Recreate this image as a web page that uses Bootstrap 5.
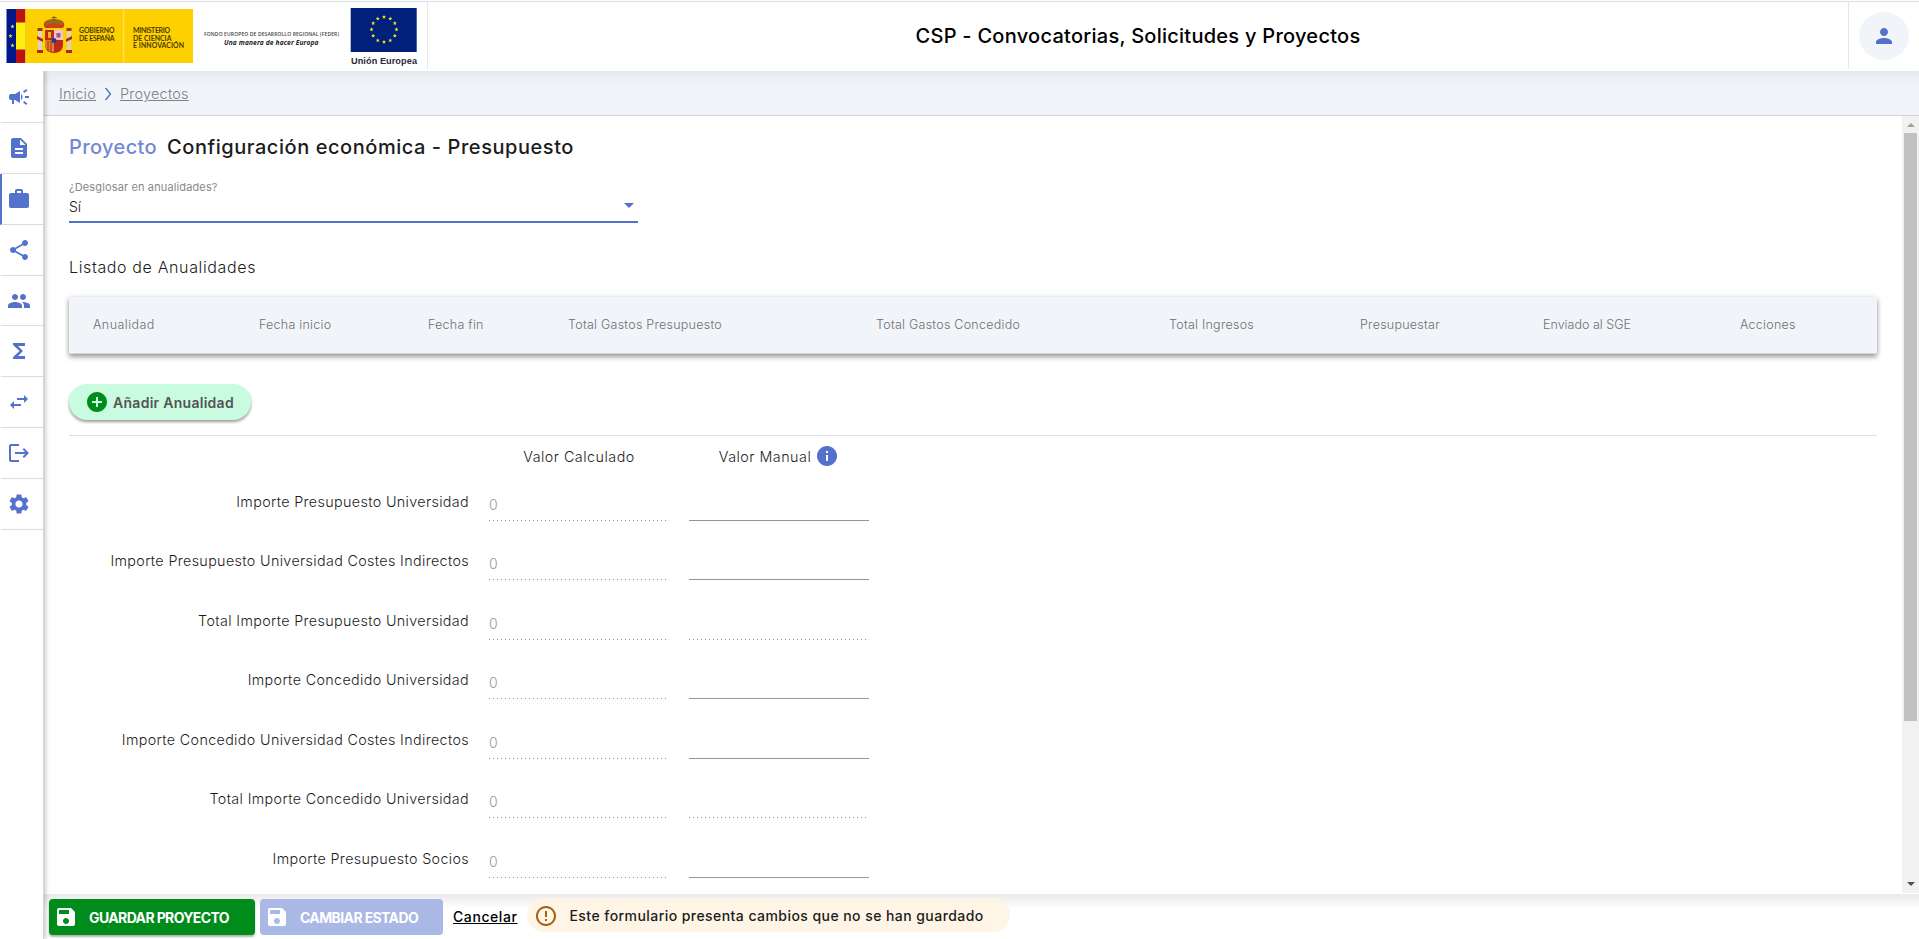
<!DOCTYPE html>
<html lang="es">
<head>
<meta charset="utf-8">
<meta name="viewport" content="width=device-width, initial-scale=1">
<title>CSP - Convocatorias, Solicitudes y Proyectos</title>
<link href="https://cdn.jsdelivr.net/npm/bootstrap@5.3.0/dist/css/bootstrap.min.css" rel="stylesheet">
<style>
  :root { --accent:#5472cb; --ink:#1c1c1c; --panel:#f1f5f9; }
  body { font-family: Inter, "Open Sans", sans-serif; font-size:14px; color:var(--ink); height:939px; overflow:hidden; background:#fff; }
  svg { display:block; flex:none; }
  .ic { width:24px; height:24px; fill:currentColor; }
  .topbar { height:70px; border-top:1px solid #dadde0; margin-top:1px; z-index:3; position:relative; }
  .brand { width:428px; height:67px; border-right:1px solid #e6e8ee; }
  .app-title { font-size:20px; font-weight:500; color:#000; line-height:30px; letter-spacing:.26px; padding-bottom:2px; }
  .user-box { width:71px; height:67px; border-left:1px solid #e6e8ee; padding:10px; }
  .avatar { width:50px; height:48px; background:var(--panel); color:var(--accent); }
  .side { width:44px; border-right:1px solid #d5d5d5; box-shadow:1px 0 5px rgba(0,0,0,.28); background:#fff; z-index:2; position:relative; padding-top:1.4px; }
  .side a { height:50.8px; border-bottom:1px solid #dcdcdc; border-left:2px solid transparent; padding-left:5px; padding-top:.4px; color:var(--accent); }
  .side a.active { border-left-color:var(--accent); }
  .crumbs { height:45px; border-bottom:1px solid #d0d5da; background:linear-gradient(#e6e9ec,var(--panel) 15px); padding:2px 0 0 15px; font-size:14.5px; font-weight:300; letter-spacing:.2px; }
  .crumbs a { color:#808080; }
  .pane { padding:0 25px; overflow:hidden; }
  h1.page { font-size:20px; font-weight:500; line-height:30px; margin:16px 0 0; letter-spacing:.55px; }
  h1 .kind { color:#7189d4; margin-right:10px; letter-spacing:.38px; }
  .f-label { font-size:11px; color:#888; line-height:16px; margin-top:17px; letter-spacing:.13px; }
  .f-select { width:569px; height:28px; border-bottom:2px solid var(--accent); line-height:24px; font-weight:300; padding-right:4px; }
  .caret { border:5px solid transparent; border-top-color:var(--accent); border-bottom:0; margin-top:8px; }
  h2.listing { font-size:16px; font-weight:300; line-height:24px; margin:32px 0 18px; letter-spacing:.63px; }
  .thead-bar { height:57px; background:var(--panel); border-bottom:1px solid #d3d7dc; box-shadow:0 3px 5px rgba(0,0,0,.36),0 0 6px rgba(0,0,0,.1); padding-left:24px;
    display:grid; grid-template-columns:166px 169px 140px 308px 293px 191px 183px 197px 1fr; align-items:center; font-size:12.5px; font-weight:300; letter-spacing:.25px; color:#707070; }
  .thead-bar .wide-ls { letter-spacing:.45px; }
  .thead-bar .tight-ls { letter-spacing:.02px; }
  .btn-add { width:182px; height:36px; margin-top:30px; border-radius:18px; background:#c9fbe0; color:#555; font-weight:600; font-size:14px; letter-spacing:.28px; box-shadow:0 2px 3px rgba(0,0,0,.4); padding:0 0 0 15px; gap:4px; }
  .btn-add .ic { color:#008c1a; }
  .sep { border-top:1px solid #dedede; margin-top:15px; }
  .fgrid { display:grid; grid-template-columns:400px 180px 180px; column-gap:20px; }
  .fhead { height:41px; font-weight:300; font-size:14.3px; letter-spacing:.5px; }
  .fhead .ic { color:var(--accent); margin-left:4px; position:relative; top:-1px; }
  .frow { height:59.45px; font-weight:300; }
  .frow label { line-height:22px; padding-top:14px; font-size:14.3px; letter-spacing:.36px; }
  .val { height:44px; padding-top:18px; line-height:20px; color:#999; }
  .val::after { content:""; display:block; height:1px; margin-top:5px; }
  .val.dis::after { width:178px; background:repeating-linear-gradient(90deg,#949494 0 1px,transparent 1px 4px); }
  .val.on::after { background:#949494; }
  .sbar { width:17px; background:#f1f1f1; padding:7px 0; height:777px; }
  .thumb { width:13px; height:588px; background:#c1c1c1; margin-top:6px; }
  .arr { border:4px solid transparent; }
  .arr.up { border-bottom-color:#a0a0a0; border-top:0; }
  .arr.dn { border-top-color:#505050; border-bottom:0; }
  .foot { height:45px; background:linear-gradient(#eaeaea,#fff 15px); padding:5px 0 0 5px; }
  .fbtn { height:36px; border-radius:4px; font-weight:700; font-size:14px; padding:0 0 0 4px; gap:11px; letter-spacing:-.62px; }
  .fbtn, .fbtn:hover { color:#fff; }
  .b-save, .b-save:hover { width:206px; background:#008c1a; box-shadow:0 2px 2px rgba(0,0,0,.3); }
  .b-state, .b-state:hover { width:183px; background:#aab8e6; margin-left:5px; }
  .cancel { color:#000; font-weight:500; margin-left:10px; line-height:36px; letter-spacing:.58px; }
  .notice { height:34px; width:483px; border-radius:17px; background:#fff5e6; margin-left:10px; padding-left:7px; gap:11px; font-weight:500; margin-top:-1px; letter-spacing:.44px; }
  .notice .ic { color:#a5620c; position:relative; top:1px; }
</style>
</head>
<body class="d-flex flex-column">
<header class="topbar d-flex justify-content-between bg-white flex-shrink-0">
  <div class="brand">
    <svg width="427" height="68" viewBox="0 2 427 68">
      <rect x="6.500" y="9" width="10" height="54" fill="#00188c"/>
      <rect x="16" y="9" width="9.500" height="54" fill="#bd1212"/><rect x="16" y="22.500" width="9.500" height="27" fill="#ffef0f"/>
      <rect x="25.500" y="9" width="167.500" height="54" fill="#ffd000"/>
      <path d="M123.700 9v54" stroke="#ffe680" stroke-width="1"/>
      <defs><path id="st" d="M0-2.200.55-.7 2.100-.7.850.25 1.300 1.800 0 .9-1.300 1.800-.85.25-2.100-.7-.55-.7z"/></defs>
      <g fill="#ffe81a"><use href="#st" x="12.500" y="26.500"/><use href="#st" x="10.500" y="36"/><use href="#st" x="12.500" y="45.500"/></g>
      <g>
        <path d="M38 31h4v19h-4zM67 31h4v19h-4z" fill="#d9d2c0"/><path d="M37.500 28h5v3h-5zM66.500 28h5v3h-5z" fill="#a33a1a"/>
        <path d="M37 36l6 3v3l-6-3zM72 36l-6 3v3l6-3zM37 50h6v3h-6zM66 50h6v3h-6z" fill="#b3261a"/>
        <path d="M45 28c-4-6 2-8 9-8s13 2 9 8z" fill="#c8401c"/><path d="M44.500 22c3-4 16-4 19 0l-2 3c-4-2-11-2-15 0z" fill="#9b6a12"/>
        <path d="M54 16v5M51.500 17.700h5" stroke="#7a5a14"/>
        <path d="M45 30h18v15c0 5-4 8-9 8s-9-3-9-8z" fill="#c0281c"/><path d="M54 30h9v10h-9z" fill="#e9c6d0"/><path d="M45 40h9v12c-5 0-9-3-9-7z" fill="#d9862a"/>
        <path d="M48 32h3v6h-3z" fill="#f2b41c"/><path d="M56.500 33h4v4.500h-4z" fill="#b0508a"/><circle cx="54" cy="40.500" r="2.500" fill="#21408c"/>
        <path d="M48 41v10M51 41v11" stroke="#b3261a"/>
      </g>
      <g font-family="Lato, sans-serif" font-weight="700" font-size="6.900" fill="#4a3b00">
        <text x="79" y="33" textLength="35.500">GOBIERNO</text><text x="79" y="41" textLength="35.500">DE ESPAÑA</text>
        <text x="133" y="33" textLength="37">MINISTERIO</text><text x="133" y="41" textLength="38.500">DE CIENCIA</text><text x="133" y="48" textLength="51">E INNOVACIÓN</text>
      </g>
      <g font-family="Open Sans, sans-serif" fill="#222">
        <text x="204" y="36" font-size="5" textLength="135" fill="#444" font-weight="600">FONDO EUROPEO DE DESARROLLO REGIONAL (FEDER)</text>
        <text x="224" y="44.500" font-size="6.600" font-weight="700" font-style="italic" textLength="94.500">Una manera de hacer Europa</text>
      </g>
      <rect x="350.700" y="8" width="66" height="44" fill="#00207c"/>
      <g fill="#ffe81a" id="euro"></g>
      <text x="351" y="64.300" font-family="Liberation Sans, sans-serif" font-weight="700" font-size="9.200" textLength="66" fill="#2b2b3a">Unión Europea</text>
    </svg>
  </div>
  <div class="app-title align-self-center">CSP - Convocatorias, Solicitudes y Proyectos</div>
  <div class="user-box"><div class="avatar rounded-circle d-flex align-items-center justify-content-center"><svg class="ic" viewBox="0 0 24 24"><path d="M12 12c2.210 0 4-1.790 4-4s-1.790-4-4-4-4 1.790-4 4 1.790 4 4 4zm0 2c-2.670 0-8 1.340-8 4v2h16v-2c0-2.660-5.330-4-8-4z"/></svg></div></div>
</header>
<div class="d-flex flex-grow-1">
  <nav class="side d-flex flex-column flex-shrink-0">
    <a class="d-flex align-items-center flex-shrink-0" href="#"><svg class="ic" viewBox="0 0 24 24"><path d="M18 11v2h4v-2h-4zm-2 6.610c.96.71 2.210 1.650 3.200 2.390.4-.53.8-1.070 1.200-1.600-.99-.74-2.240-1.680-3.200-2.400-.4.540-.8 1.080-1.200 1.610zM20.400 5.600c-.4-.53-.8-1.070-1.200-1.600-.99.74-2.240 1.680-3.200 2.400.4.530.8 1.070 1.200 1.600.96-.72 2.210-1.650 3.200-2.400zM4 9c-1.100 0-2 .9-2 2v2c0 1.100.9 2 2 2h1v4h2v-4h1l5 3V6L8 9H4zm11.500 3c0-1.330-.58-2.530-1.500-3.350v6.690c.92-.81 1.500-2.010 1.500-3.340z"/></svg></a>
    <a class="d-flex align-items-center flex-shrink-0" href="#"><svg class="ic" viewBox="0 0 24 24"><path d="M14 2H6c-1.100 0-1.990.9-1.990 2L4 20c0 1.100.89 2 1.990 2H18c1.100 0 2-.9 2-2V8l-6-6zm2 16H8v-2h8v2zm0-4H8v-2h8v2zm-3-5V3.500L18.500 9H13z"/></svg></a>
    <a class="d-flex align-items-center flex-shrink-0 active" href="#"><svg class="ic" viewBox="0 0 24 24"><path d="M20 6h-4V4c0-1.110-.89-2-2-2h-4c-1.110 0-2 .89-2 2v2H4c-1.110 0-1.990.89-1.990 2L2 19c0 1.110.89 2 2 2h16c1.110 0 2-.89 2-2V8c0-1.110-.89-2-2-2zm-6 0h-4V4h4v2z"/></svg></a>
    <a class="d-flex align-items-center flex-shrink-0" href="#"><svg class="ic" viewBox="0 0 24 24"><path d="M18 16.080c-.76 0-1.440.3-1.960.77L8.910 12.700c.05-.23.090-.46.090-.7s-.04-.47-.09-.7l7.050-4.110c.54.5 1.250.81 2.040.81 1.660 0 3-1.340 3-3s-1.340-3-3-3-3 1.340-3 3c0 .24.040.47.090.7L8.040 9.810C7.500 9.310 6.790 9 6 9c-1.660 0-3 1.340-3 3s1.340 3 3 3c.79 0 1.500-.31 2.040-.81l7.120 4.160c-.05.210-.08.430-.08.650 0 1.610 1.310 2.920 2.920 2.920s2.920-1.310 2.920-2.920-1.310-2.920-2.920-2.920z"/></svg></a>
    <a class="d-flex align-items-center flex-shrink-0" href="#"><svg class="ic" viewBox="0 0 24 24"><path d="M16 11c1.660 0 2.990-1.340 2.990-3S17.660 5 16 5s-3 1.340-3 3 1.340 3 3 3zm-8 0c1.660 0 2.990-1.340 2.990-3S9.660 5 8 5 5 6.340 5 8s1.340 3 3 3zm0 2c-2.330 0-7 1.170-7 3.500V19h14v-2.500c0-2.330-4.670-3.500-7-3.500zm8 0c-.29 0-.62.020-.97.050 1.160.84 1.970 1.970 1.970 3.450V19h6v-2.500c0-2.330-4.670-3.500-7-3.500z"/></svg></a>
    <a class="d-flex align-items-center flex-shrink-0" href="#"><svg class="ic" viewBox="0 0 24 24"><path d="M18 4H6v2l6.500 6L6 18v2h12v-3h-7l5-5-5-5h7z"/></svg></a>
    <a class="d-flex align-items-center flex-shrink-0" href="#"><svg class="ic" viewBox="0 0 24 24"><path d="M6.990 11L3 15l3.990 4v-3H14v-2H6.990v-3zM21 9l-3.990-4v3H10v2h7.010v3L21 9z"/></svg></a>
    <a class="d-flex align-items-center flex-shrink-0" href="#"><svg class="ic" viewBox="0 0 24 24"><path d="M17 7l-1.410 1.410L18.170 11H8v2h10.170l-2.580 2.580L17 17l5-5zM4 5h8V3H4c-1.100 0-2 .9-2 2v14c0 1.100.9 2 2 2h8v-2H4V5z"/></svg></a>
    <a class="d-flex align-items-center flex-shrink-0" href="#"><svg class="ic" viewBox="0 0 24 24"><path d="M19.140 12.940c.04-.3.060-.61.060-.94 0-.32-.02-.64-.07-.94l2.030-1.580c.18-.14.230-.41.120-.61l-1.920-3.320c-.12-.22-.37-.29-.59-.22l-2.390.96c-.5-.38-1.030-.7-1.620-.94L14.400 2.810c-.04-.24-.24-.41-.48-.41h-3.840c-.24 0-.43.170-.47.410L9.250 5.350c-.59.240-1.130.57-1.620.94l-2.390-.96c-.22-.08-.47 0-.59.220L2.740 8.870c-.12.210-.08.470.12.610l2.030 1.580c-.05.300-.09.630-.09.940s.02.640.070.94l-2.030 1.580c-.18.140-.23.410-.12.610l1.920 3.320c.12.220.37.290.59.220l2.390-.96c.5.380 1.030.7 1.620.94l.36 2.540c.05.240.24.410.48.410h3.840c.24 0 .44-.17.470-.41l.36-2.540c.59-.24 1.130-.56 1.620-.94l2.390.96c.22.080.47 0 .59-.22l1.920-3.320c.12-.22.070-.47-.12-.61l-2.010-1.580zM12 15.600c-1.980 0-3.600-1.620-3.600-3.600s1.620-3.600 3.600-3.600 3.600 1.620 3.600 3.600-1.620 3.600-3.600 3.600z"/></svg></a>
  </nav>
  <div class="d-flex flex-column flex-grow-1">
    <div class="crumbs d-flex align-items-center flex-shrink-0">
      <a href="#">Inicio</a>
      <svg width="24" height="16" viewBox="0 0 24 16"><path d="M9.500 2l5 6-5 6" fill="none" stroke="#5472cb" stroke-width="1.400"/></svg>
      <a href="#">Proyectos</a>
    </div>
    <div class="d-flex">
      <main class="pane flex-grow-1" style="height:778px">
        <h1 class="page d-flex"><span class="kind">Proyecto</span><span>Configuración económica - Presupuesto</span></h1>
        <div class="f-label">¿Desglosar en anualidades?</div>
        <div class="f-select d-flex justify-content-between"><span>Sí</span><i class="caret"></i></div>
        <h2 class="listing">Listado de Anualidades</h2>
        <div class="thead-bar"><div class="wide-ls">Anualidad</div><div>Fecha inicio</div><div>Fecha fin</div><div>Total Gastos Presupuesto</div><div>Total Gastos Concedido</div><div>Total Ingresos</div><div>Presupuestar</div><div class="tight-ls">Enviado al SGE</div><div>Acciones</div></div>
        <button class="btn btn-add d-flex align-items-center"><svg class="ic" viewBox="0 0 24 24"><path d="M12 2C6.480 2 2 6.480 2 12s4.480 10 10 10 10-4.480 10-10S17.520 2 12 2zm5 11h-4v4h-2v-4H7v-2h4V7h2v4h4v2z"/></svg><span>Añadir Anualidad</span></button>
        <div class="sep"></div>
        <div class="fgrid fhead align-items-center"><i></i><div class="text-center">Valor Calculado</div><div class="d-flex justify-content-center align-items-center"><span>Valor Manual</span><svg class="ic" viewBox="0 0 24 24"><path d="M12 2C6.480 2 2 6.480 2 12s4.480 10 10 10 10-4.480 10-10S17.520 2 12 2zm1 15h-2v-6h2v6zm0-8h-2V7h2v2z"/></svg></div></div>
        <div id="rows"></div>
      </main>
      <div class="sbar d-flex flex-column align-items-center"><i class="arr up"></i><div class="thumb"></div><i class="arr dn mt-auto"></i></div>
    </div>
    <footer class="foot d-flex flex-shrink-0">
      <button class="btn fbtn b-save d-flex align-items-center"><svg class="ic" viewBox="0 0 24 24"><path d="M17 3H5c-1.110 0-2 .9-2 2v14c0 1.100.89 2 2 2h14c1.100 0 2-.9 2-2V7l-4-4zm-5 16c-1.660 0-3-1.340-3-3s1.340-3 3-3 3 1.340 3 3-1.340 3-3 3zm3-10H5V5h10v4z"/></svg><span>GUARDAR PROYECTO</span></button>
      <button class="btn fbtn b-state d-flex align-items-center"><svg class="ic" viewBox="0 0 24 24"><path d="M17 3H5c-1.110 0-2 .9-2 2v14c0 1.100.89 2 2 2h14c1.100 0 2-.9 2-2V7l-4-4zm-5 16c-1.660 0-3-1.340-3-3s1.340-3 3-3 3 1.340 3 3-1.340 3-3 3zm3-10H5V5h10v4z"/></svg><span>CAMBIAR ESTADO</span></button>
      <a class="cancel" href="#">Cancelar</a>
      <div class="notice d-flex align-items-center"><svg class="ic" viewBox="0 0 24 24"><path d="M11 15h2v2h-2zm0-8h2v6h-2zm.99-5C6.470 2 2 6.480 2 12s4.470 10 9.990 10C17.520 22 22 17.520 22 12S17.520 2 11.990 2zM12 20c-4.420 0-8-3.580-8-8s3.580-8 8-8 8 3.580 8 8-3.580 8-8 8z"/></svg><span>Este formulario presenta cambios que no se han guardado</span></div>
    </footer>
  </div>
</div>
<script>
  // Budget rows: label and whether the manual value can be edited
  const rows = [["Importe Presupuesto Universidad",1],["Importe Presupuesto Universidad Costes Indirectos",1],["Total Importe Presupuesto Universidad",0],["Importe Concedido Universidad",1],["Importe Concedido Universidad Costes Indirectos",1],["Total Importe Concedido Universidad",0],["Importe Presupuesto Socios",1]];
  document.getElementById("rows").innerHTML = rows.map(([t,e]) => `<div class="fgrid frow"><label class="text-end">${t}</label><div class="val dis">0</div><div class="val ${e?"on":"dis"}">&nbsp;</div></div>`).join("");
  // Ring of twelve stars
  document.getElementById("euro").innerHTML = Array.from({length:12},(_,i)=>`<use href="#st" x="${384+12.5*Math.sin(i*Math.PI/6)}" y="${29.5-12.5*Math.cos(i*Math.PI/6)}"/>`).join("");
</script>
<script src="https://cdn.jsdelivr.net/npm/bootstrap@5.3.0/dist/js/bootstrap.bundle.min.js"></script>
</body>
</html>
